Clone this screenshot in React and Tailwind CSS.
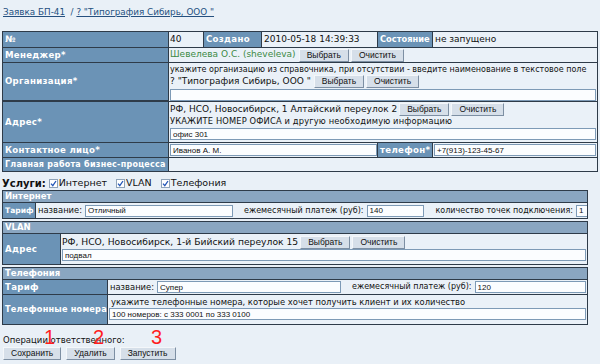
import React from 'react';

const V = "font-['DejaVu_Sans',sans-serif]";
const T = "font-['Liberation_Sans',sans-serif]";

function Btn({ children }) {
  return (
    <button className={`${T} h-[13px] px-[7px] text-[8.5px] leading-none whitespace-nowrap shrink-0 text-[#111] bg-[#d6dfe9] border border-t-[#f4f7fa] border-l-[#f4f7fa] border-b-[#7d8fa3] border-r-[#7d8fa3]`}>
      {children}
    </button>
  );
}

function Field({ value, className = '' }) {
  return (
    <input
      readOnly
      defaultValue={value}
      className={`${T} h-[12px] px-[2px] text-[8px] leading-none shrink-0 min-w-0 text-[#111] bg-[#fbfdff] border border-[#7d9ab6] outline-none ${className}`}
    />
  );
}

function Label({ children, className = '' }) {
  return (
    <div className={`${V} bg-[#6b93b6] text-white font-bold whitespace-nowrap overflow-hidden flex items-center pl-[2px] ${className}`}>
      {children}
    </div>
  );
}

function Cell({ children, className = '' }) {
  return <div className={`bg-[#eaf1f8] whitespace-nowrap overflow-hidden ${className}`}>{children}</div>;
}

function Check({ label }) {
  return (
    <span className="flex items-center gap-[1px] mr-[9px]">
      <span className="w-[9px] h-[9px] bg-white border border-[#8fa3b8] flex items-center justify-center">
        <svg width="7" height="7" viewBox="0 0 7 7">
          <path d="M1 3.6 L2.8 5.6 L6 1" fill="none" stroke="#2457b8" strokeWidth="1.3" />
        </svg>
      </span>
      <span className={`${V} text-[9.5px]`}>{label}</span>
    </span>
  );
}

function SubHead({ children }) {
  return (
    <div className={`${V} bg-[#8aa6c1] text-white font-bold text-[8.5px] h-[11px] flex items-center pl-[2px] col-span-full`}>
      {children}
    </div>
  );
}

const L = 'text-[8.6px] tracking-[0.3px]';

export default function App() {
  return (
    <div className={`${V} w-[600px] h-[364px] bg-[#e9f0f7] text-[#111] relative overflow-hidden`}>
      {/* заголовок */}
      <div className="pl-[3px] pt-[6px] h-[31px] text-[8.8px] text-[#25507f] whitespace-nowrap">
        <span className="underline">Заявка БП-41</span>
        <span>&nbsp; / </span>
        <span className="underline">? "Типография Сибирь, ООО "</span>
      </div>

      {/* основная таблица */}
      <div className="ml-[2px] w-[596px] bg-[#2e3b49] p-px gap-px grid grid-cols-[165px_34px_57px_115px_54px_1fr] text-[9px]">
        <Label className={`h-[15px] ${L}`}>№</Label>
        <Cell className="flex items-center pl-[1px]">40</Cell>
        <Label className={L}>Создано</Label>
        <Cell className="flex items-center pl-[2px]">2010-05-18 14:39:33</Cell>
        <Label className="text-[8.3px] pl-[1px]">Состояние</Label>
        <Cell className="flex items-center pl-[2px]">не запущено</Cell>

        <Label className={`h-[14px] ${L}`}>Менеджер*</Label>
        <Cell className="col-span-5 flex items-center pl-[1px] gap-[2px]">
          <span className="text-[#3c8a45] mr-[1px]">Шевелева О.С. (sheveleva)</span>
          <Btn>Выбрать</Btn>
          <Btn>Очистить</Btn>
        </Cell>

        <Label className={`h-[37px] ${L}`}>Организация*</Label>
        <Cell className="col-span-5 flex flex-col pl-[1px] pr-[1px] pt-[1px]">
          <div className="text-[8px] leading-[11px]">укажите организацию из справочника, при отсутствии - введите наименование в текстовое поле</div>
          <div className="flex items-center gap-[2px] h-[13px]">
            <span className="text-[9px] mr-[1px]">? "Типография Сибирь, ООО "</span>
            <Btn>Выбрать</Btn>
            <Btn>Очистить</Btn>
          </div>
          <Field value="" className="w-full mt-[1px]" />
        </Cell>

        <Label className={`h-[40px] ${L}`}>Адрес*</Label>
        <Cell className="col-span-5 flex flex-col pl-[1px] pr-[1px] pt-[1px]">
          <div className="flex items-center gap-[2px] h-[13px]">
            <span className="text-[9px]">РФ, НСО, Новосибирск, 1 Алтайский переулок 2</span>
            <Btn>Выбрать</Btn>
            <Btn>Очистить</Btn>
          </div>
          <div className="text-[8.3px] leading-[11px] tracking-[0.15px]">УКАЖИТЕ НОМЕР ОФИСА и другую необходимую информацию</div>
          <Field value="офис 301" className="w-full mt-[1px]" />
        </Cell>

        <Label className={`h-[14px] ${L}`}>Контактное лицо*</Label>
        <Cell className="col-span-3 flex items-center pl-[1px]">
          <Field value="Иванов А. М." className="w-full" />
        </Cell>
        <Label className={L}>телефон*</Label>
        <Cell className="flex items-center pl-[1px] pr-[1px]">
          <Field value="+7(913)-123-45-67" className="w-full" />
        </Cell>

        <Label className="h-[13px] text-[8px] tracking-[0.25px]">Главная работа бизнес-процесса</Label>
        <Cell className="col-span-5" />
      </div>

      {/* услуги */}
      <div className="flex items-center pl-[2px] h-[14px] mt-[4px]">
        <span className="font-bold text-[10px] mr-[3px]">Услуги:</span>
        <Check label="Интернет" />
        <Check label="VLAN" />
        <Check label="Телефония" />
      </div>

      {/* Интернет */}
      <div className="ml-[2px] w-[586px] bg-[#2e3b49] p-px gap-px grid grid-cols-[32px_1fr] text-[8px]">
        <SubHead>Интернет</SubHead>
        <Label className="h-[15px] text-[7.6px] pl-[1px]">Тариф</Label>
        <Cell className="flex items-center pl-[2px] gap-[3px]">
          <span className="text-[8.4px]">название:</span>
          <Field value="Отличный" className="w-[148px]" />
          <span className="ml-[8px]">ежемесячный платеж (руб):</span>
          <Field value="140" className="w-[57px]" />
          <span className="ml-[9px]">количество точек подключения:</span>
          <Field value="1" className="w-[21px]" />
        </Cell>
      </div>

      {/* VLAN */}
      <div className="ml-[2px] mt-[2px] w-[586px] bg-[#2e3b49] p-px gap-px grid grid-cols-[57px_1fr]">
        <SubHead>VLAN</SubHead>
        <Label className={`h-[30px] ${L}`}>Адрес</Label>
        <Cell className="flex flex-col pl-[1px] pr-[1px] pt-[1px]">
          <div className="flex items-center gap-[2px] h-[14px]">
            <span className="text-[9.2px]">РФ, НСО, Новосибирск, 1-й Бийский переулок 15</span>
            <Btn>Выбрать</Btn>
            <Btn>Очистить</Btn>
          </div>
          <Field value="подвал" className="w-full" />
        </Cell>
      </div>

      {/* Телефония */}
      <div className="ml-[2px] mt-[2px] w-[586px] bg-[#2e3b49] p-px gap-px grid grid-cols-[104px_1fr] text-[8px]">
        <SubHead>Телефония</SubHead>
        <Label className={`h-[14px] ${L}`}>Тариф</Label>
        <Cell className="flex items-center pl-[2px] gap-[3px]">
          <span className="text-[8.4px]">название:</span>
          <Field value="Супер" className="w-[184px]" />
          <span className="ml-[8px]">ежемесячный платеж (руб):</span>
          <Field value="120" className="w-[111px]" />
        </Cell>
        <Label className="h-[29px] text-[8.2px] tracking-[0.2px]">Телефонные номера</Label>
        <Cell className="flex flex-col pl-[1px] pr-[1px] pt-[1px]">
          <div className="pl-[2px] text-[8.4px] leading-[12px]">укажите телефонные номера, которые хочет получить клиент и их количество</div>
          <Field value="100 номеров: с 333 0001 по 333 0100" className="w-full" />
        </Cell>
      </div>

      {/* операции */}
      <div className="pl-[3px] mt-[10px] text-[8.5px] leading-[11px]">Операции ответственного:</div>
      <div className="flex gap-[5px] pl-[3px] mt-[1px]">
        <Btn>Сохранить</Btn>
        <Btn>Удалить</Btn>
        <Btn>Запустить</Btn>
      </div>

      {/* пометки */}
      <span className={`${T} absolute left-[44px] top-[327px] text-[20px] leading-none text-[#ff1e1e]`}>1</span>
      <span className={`${T} absolute left-[93px] top-[327px] text-[20px] leading-none text-[#ff1e1e]`}>2</span>
      <span className={`${T} absolute left-[151px] top-[327px] text-[20px] leading-none text-[#ff1e1e]`}>3</span>
    </div>
  );
}
